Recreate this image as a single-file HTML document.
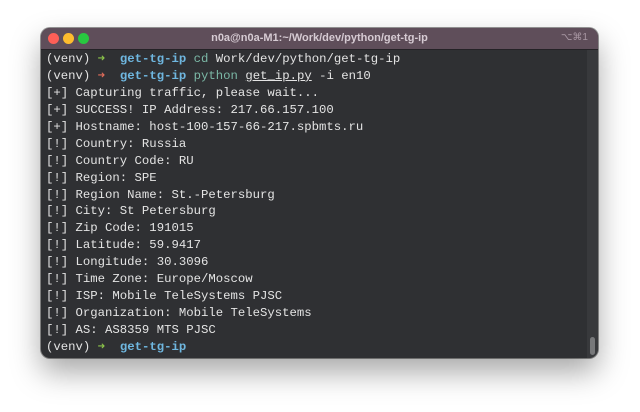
<!DOCTYPE html>
<html><head><style>
html,body{margin:0;padding:0;width:640px;height:412px;background:#fff;overflow:hidden}
.win{position:absolute;left:41px;top:28px;width:557px;height:330px;border-radius:9px;background:#2f3033;overflow:hidden;box-shadow:0 14px 30px rgba(0,0,0,.35),0 0 0 1px rgba(0,0,0,.4)}
.tb{position:absolute;left:0;top:0;right:0;height:21px;background:#5f4e5a;border-bottom:1px solid #242226}
.dot{position:absolute;top:5px;width:11px;height:11px;border-radius:50%}
.title{position:absolute;left:0;right:0;top:4px;text-align:center;font:bold 11px "Liberation Sans",sans-serif;color:#d6cbd3}
.sc{position:absolute;right:10px;top:4px;font:10px "Liberation Sans",sans-serif;color:#a897a3}
.sbar{position:absolute;right:0;top:22px;bottom:0;width:11px;background:#38393c}
.thumb{position:absolute;right:3px;bottom:3px;width:5px;height:18px;border-radius:3px;background:#77787a}
pre{position:absolute;left:5px;top:23px;margin:0;font:12.3px/16.94px "Liberation Mono",monospace;color:#e4e4e4}
.g{color:#8bc34a}.b{color:#6fb7e0;font-weight:bold}.c{color:#7bb8a6}.u{text-decoration:underline}
</style></head><body>
<div class="win">
<div class="tb">
<div class="dot" style="left:7px;background:#fe5f57"></div>
<div class="dot" style="left:22px;background:#febc2e"></div>
<div class="dot" style="left:37px;background:#28c840"></div>
<div class="title">n0a@n0a-M1:~/Work/dev/python/get-tg-ip</div>
<div class="sc">⌥⌘1</div>
</div>
<div class="sbar"><div class="thumb"></div></div>
<pre>(venv) <span class="g">➜</span>  <span class="b">get-tg-ip</span> <span class="c">cd</span> Work/dev/python/get-tg-ip
(venv) <span style="color:#e06c5a">➜</span>  <span class="b">get-tg-ip</span> <span class="c">python</span> <span class="u">get_ip.py</span> -i en10
[+] Capturing traffic, please wait...
[+] SUCCESS! IP Address: 217.66.157.100
[+] Hostname: host-100-157-66-217.spbmts.ru
[!] Country: Russia
[!] Country Code: RU
[!] Region: SPE
[!] Region Name: St.-Petersburg
[!] City: St Petersburg
[!] Zip Code: 191015
[!] Latitude: 59.9417
[!] Longitude: 30.3096
[!] Time Zone: Europe/Moscow
[!] ISP: Mobile TeleSystems PJSC
[!] Organization: Mobile TeleSystems
[!] AS: AS8359 MTS PJSC
(venv) <span class="g">➜</span>  <span class="b">get-tg-ip</span></pre>
</div>
</body></html>
